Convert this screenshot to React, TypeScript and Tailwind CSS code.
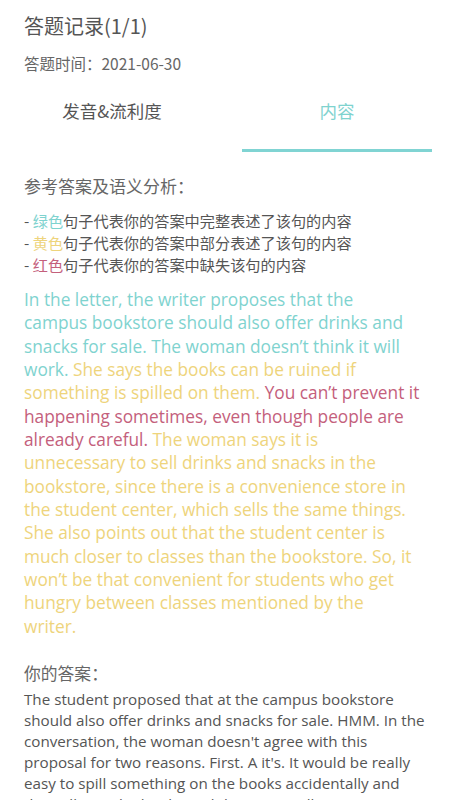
import React from 'react';

const teal = 'text-[#7fd3cf]';
const yellow = 'text-[#eed47c]';
const red = 'text-[#c4607c]';

export default function App() {
  return (
    <div className="h-[800px] overflow-hidden bg-white px-6 text-[#555] font-['Noto_Sans_CJK_SC',sans-serif]">
      {/* Header */}
      <h1 className="pt-[12px] text-[20px] leading-[28px] text-[#555]">答题记录(1/1)</h1>
      <p className="mt-[13px] text-[15.5px] leading-[20px] text-[#666]">答题时间：2021-06-30</p>

      {/* Tabs */}
      <div className="-mx-6 mt-[25px] flex justify-between pl-[17px] pr-[18px]">
        <div className="flex w-[190px] flex-col items-center">
          <span className="text-[17.5px] leading-[26px] text-[#555]">发音&amp;流利度</span>
          <div className="mt-[25px] h-[3px] w-full" />
        </div>
        <div className="flex w-[190px] flex-col items-center">
          <span className="text-[17.5px] leading-[26px] text-[#7fd3cf]">内容</span>
          <div className="mt-[25px] h-[3px] w-full bg-[#80d4d3]" />
        </div>
      </div>

      {/* Reference */}
      <p className="mt-[23px] text-[17px] leading-[22px] text-[#666]">参考答案及语义分析：</p>
      <div className="mt-[12px] text-[15.2px] leading-[22px] text-[#555]">
        <p>- <span className={teal}>绿色</span>句子代表你的答案中完整表述了该句的内容</p>
        <p>- <span className={yellow}>黄色</span>句子代表你的答案中部分表述了该句的内容</p>
        <p>- <span className={red}>红色</span>句子代表你的答案中缺失该句的内容</p>
      </div>

      <p className="mt-[13px] whitespace-nowrap font-['Open_Sans',sans-serif] text-[17.3px] leading-[23.35px]">
        <span className={teal}>
          In the letter, the writer proposes that the<br />
          campus bookstore should also offer drinks and<br />
          snacks for sale. The woman doesn’t think it will<br />
          work.{' '}
        </span>
        <span className={yellow}>
          She says the books can be ruined if<br />
          something is spilled on them.{' '}
        </span>
        <span className={red}>
          You can’t prevent it<br />
          happening sometimes, even though people are<br />
          already careful.{' '}
        </span>
        <span className={yellow}>
          The woman says it is<br />
          unnecessary to sell drinks and snacks in the<br />
          bookstore, since there is a convenience store in<br />
          the student center, which sells the same things.<br />
          She also points out that the student center is<br />
          much closer to classes than the bookstore. So, it<br />
          won’t be that convenient for students who get<br />
          hungry between classes mentioned by the<br />
          writer.
        </span>
      </p>

      {/* Your answer */}
      <p className="mt-[23.5px] text-[16.8px] leading-[22px] text-[#666]">你的答案：</p>
      <p className="mt-[5.5px] whitespace-nowrap font-['Open_Sans',sans-serif] text-[15.2px] leading-[21px] text-[#555]">
        The student proposed that at the campus bookstore<br />
        should also offer drinks and snacks for sale. HMM. In the<br />
        conversation, the woman doesn't agree with this<br />
        proposal for two reasons. First. A it's. It would be really<br />
        easy to spill something on the books accidentally and<br />
        this will ruin the books and they can't sell it anymore.
      </p>
    </div>
  );
}
